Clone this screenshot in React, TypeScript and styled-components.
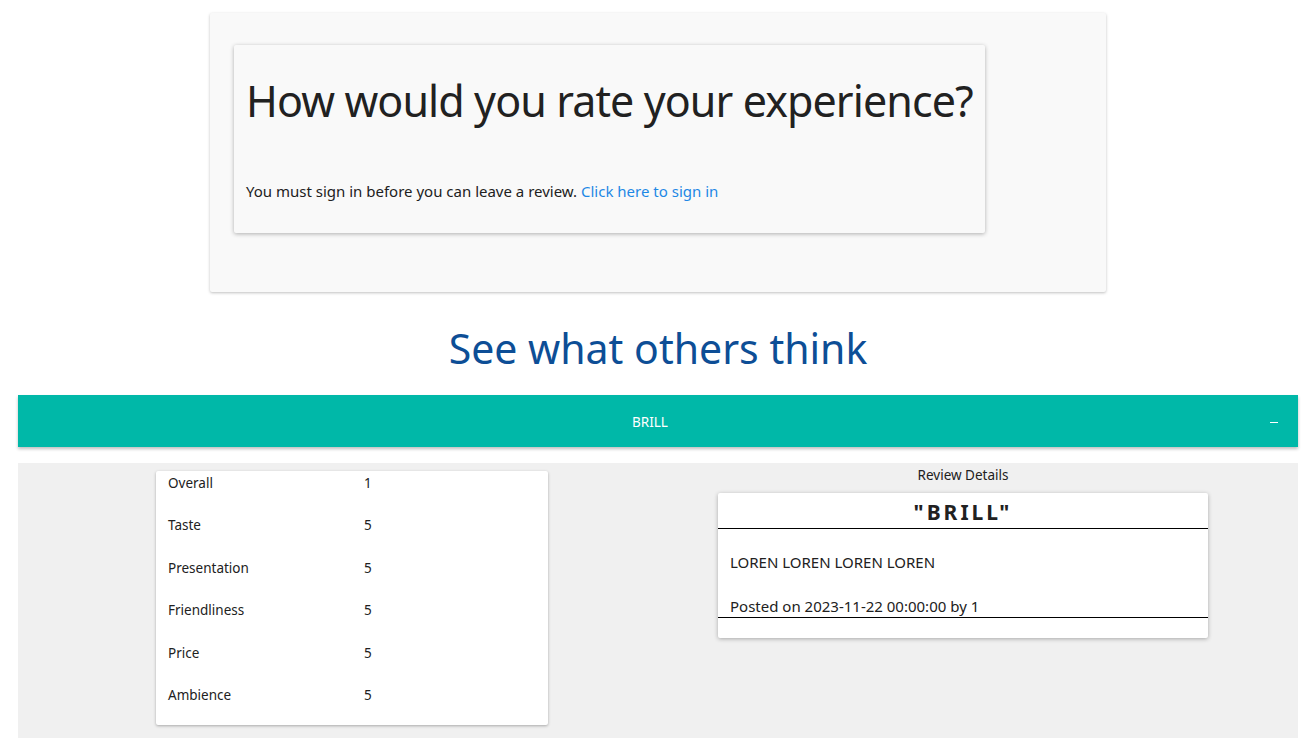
import React from "react";
import styled, { createGlobalStyle } from "styled-components";

const Global = createGlobalStyle`
  html, body { margin: 0; padding: 0; background: #fff; }
  body { font-family: "Noto Sans", "Open Sans", sans-serif; color: #212121; }
  * { box-sizing: border-box; }
`;

const Page = styled.div`
  width: 1280px;
  margin-left: 18px;
  padding-top: 13px;
`;

const RateCard = styled.section`
  width: 896px;
  height: 279px;
  margin: 0 auto;
  background: #f9f9f9;
  box-shadow: 0 1px 3px rgba(0,0,0,0.25);
  border-radius: 2px;
  padding: 32px 24px;
`;

const InnerCard = styled.div`
  width: 751px;
  height: 188px;
  background: #f9f9f9;
  box-shadow: 0 1px 4px rgba(0,0,0,0.3);
  border-radius: 2px;
  padding: 22px 11px 0 12px;
`;

const BigHeading = styled.h1`
  margin: 0;
  font-weight: 400;
  font-size: 43px;
  line-height: 68px;
  letter-spacing: -0.9px;
  color: #212121;
  white-space: nowrap;
`;

const SignText = styled.p`
  margin: 45px 0 0 0;
  font-size: 15px;
  line-height: 22px;
  color: #212121;
`;

const Link = styled.a`
  color: #1e88e5;
  text-decoration: none;
`;

const OthersTitle = styled.h2`
  margin: 26px 0 0 0;
  text-align: center;
  font-weight: 400;
  font-size: 41px;
  line-height: 60px;
  color: #0d4e96;
`;

const Accordion = styled.div`
  margin-top: 17px;
  height: 52px;
  background: #00b8a8;
  box-shadow: 0 2px 3px rgba(0,0,0,0.25);
  display: flex;
  align-items: center;
  position: relative;
`;

const AccTitle = styled.div`
  flex: 1;
  text-align: center;
  color: #fff;
  font-size: 13.5px;
  padding-top: 2px;
  padding-right: 16px;
`;

const AccToggle = styled.span`
  position: absolute;
  right: 20px;
  top: 27px;
  width: 8px;
  height: 1px;
  background: #fff;
`;

const Panel = styled.div`
  margin-top: 16px;
  background: #f0f0f0;
  height: 290px;
  display: flex;
  padding-top: 8px;
`;

const LeftCol = styled.div`
  width: 530px;
  padding-left: 138px;
`;

const ScoreCard = styled.div`
  width: 392px;
  background: #fff;
  box-shadow: 0 1px 3px rgba(0,0,0,0.3);
  border-radius: 2px;
`;

const ScoreRow = styled.div`
  display: grid;
  grid-template-columns: 1fr 1fr;
  height: 42.4px;
  padding-top: 2px;
  font-size: 13.5px;
  line-height: 20px;
  color: #212121;
`;

const Cell = styled.div`
  padding: 0 12px;
`;

const RightCol = styled.div`
  width: 750px;
  padding-left: 170px;
`;

const DetailsLabel = styled.div`
  width: 490px;
  text-align: center;
  font-size: 13.5px;
  line-height: 8px;
  height: 22px;
  color: #212121;
`;

const ReviewCard = styled.div`
  width: 490px;
  height: 145px;
  background: #fff;
  box-shadow: 0 1px 4px rgba(0,0,0,0.3);
  border-radius: 2px;
`;

const ReviewTitle = styled.div`
  height: 36px;
  border-bottom: 1px solid #000;
  text-align: center;
  font-weight: 700;
  font-size: 21px;
  letter-spacing: 3px;
  line-height: 38px;
  color: #212121;
`;

const ReviewBody = styled.div`
  padding: 0 12px;
  border-bottom: 1px solid #000;
  height: 89px;
  font-size: 15px;
  color: #212121;
`;

const BodyText = styled.p`
  margin: 0;
  padding-top: 22px;
  line-height: 22px;
`;

const Posted = styled.p`
  margin: 0;
  padding-top: 22px;
  line-height: 22px;
`;

const scores: [string, number][] = [
  ["Overall", 1],
  ["Taste", 5],
  ["Presentation", 5],
  ["Friendliness", 5],
  ["Price", 5],
  ["Ambience", 5],
];

export default function App() {
  return (
    <>
      <Global />
      <Page>
        <RateCard>
          <InnerCard>
            <BigHeading>How would you rate your experience?</BigHeading>
            <SignText>
              You must sign in before you can leave a review.{" "}
              <Link href="#">Click here to sign in</Link>
            </SignText>
          </InnerCard>
        </RateCard>
        <OthersTitle>See what others think</OthersTitle>
        <Accordion>
          <AccTitle>BRILL</AccTitle>
          <AccToggle aria-label="collapse" />
        </Accordion>
        <Panel>
          <LeftCol>
            <ScoreCard>
              {scores.map(([k, v]) => (
                <ScoreRow key={k}>
                  <Cell>{k}</Cell>
                  <Cell>{v}</Cell>
                </ScoreRow>
              ))}
            </ScoreCard>
          </LeftCol>
          <RightCol>
            <DetailsLabel>Review Details</DetailsLabel>
            <ReviewCard>
              <ReviewTitle>"BRILL"</ReviewTitle>
              <ReviewBody>
                <BodyText>LOREN LOREN LOREN LOREN</BodyText>
                <Posted>Posted on 2023-11-22 00:00:00 by 1</Posted>
              </ReviewBody>
            </ReviewCard>
          </RightCol>
        </Panel>
      </Page>
    </>
  );
}
